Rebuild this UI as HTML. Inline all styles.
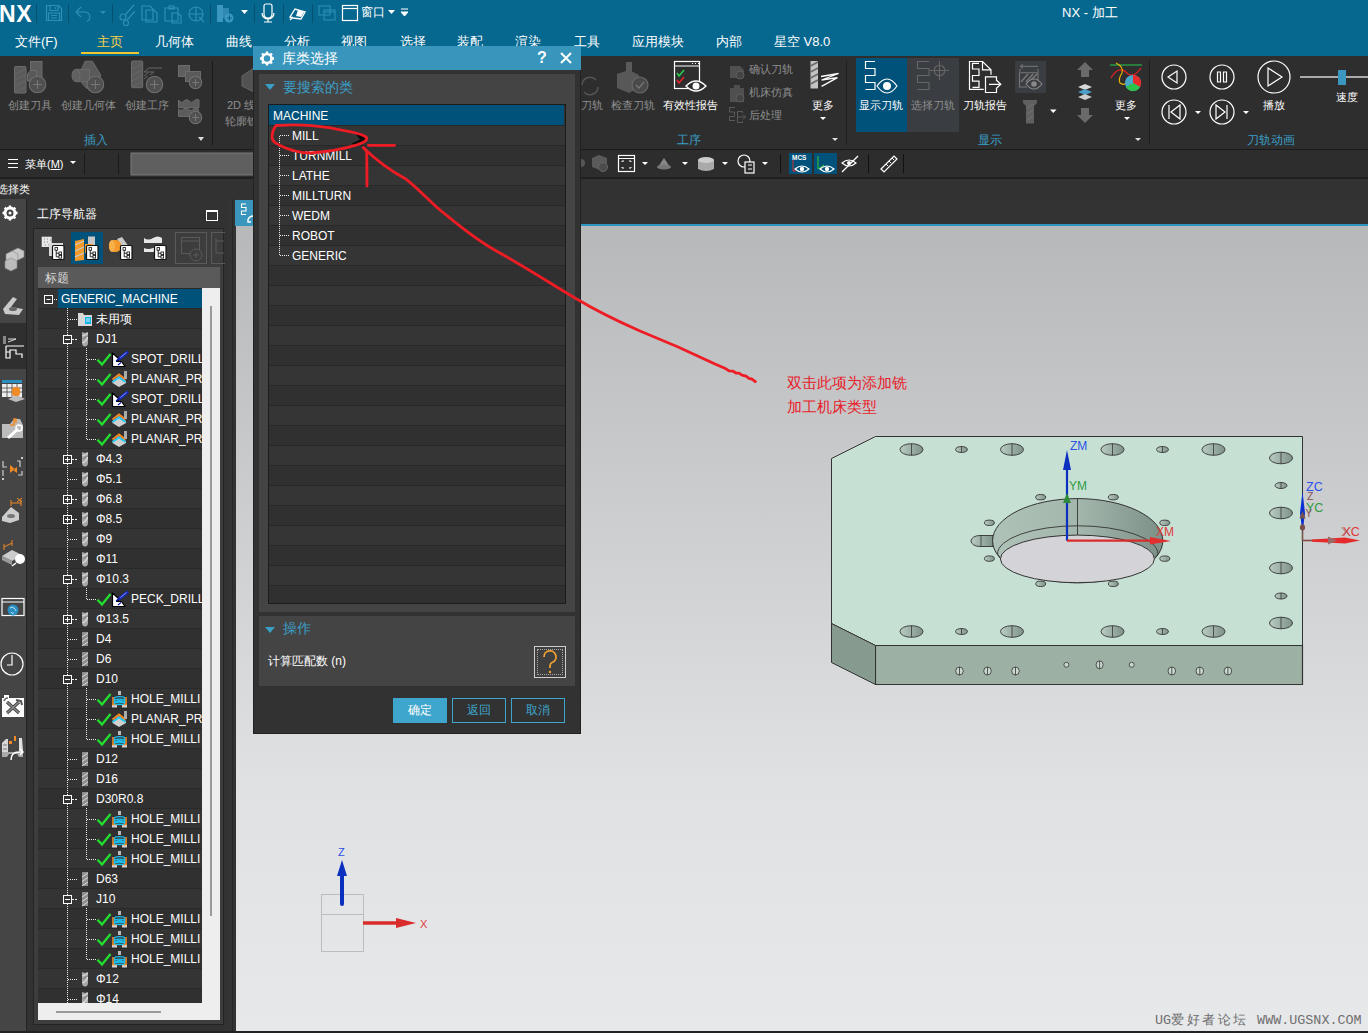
<!DOCTYPE html>
<html><head><meta charset="utf-8">
<style>
*{margin:0;padding:0;box-sizing:border-box}
html,body{width:1368px;height:1033px;overflow:hidden;background:#2f2f2f;font-family:"Liberation Sans",sans-serif;color:#fff}
.a{position:absolute}
svg{display:block}
.sepq{top:4px;width:1px;height:19px;background:#03506f}
.menu{top:33px;font-size:13px;line-height:17px;color:#fff;white-space:nowrap}
.rl{font-size:11px;line-height:14px;white-space:nowrap}
.rg{top:133px;font-size:12px;line-height:15px;color:#3a9ec6;white-space:nowrap}
.tt{position:absolute;height:20px;line-height:21px;font-size:12px;color:#fff;white-space:nowrap}
.dl{position:absolute;font-size:12px;line-height:20px;color:#fff;white-space:nowrap}
</style></head><body>

<!-- TOP BAR -->
<div class="a" style="left:0;top:0;width:1368px;height:56px;background:#07688f"></div>
<div class="a" style="left:-1px;top:1px;font:bold 23px/26px 'Liberation Sans',sans-serif;color:#fff;letter-spacing:0.6px">NX</div>
<div class="a sepq" style="left:36px"></div>
<div class="a sepq" style="left:68px"></div>
<div class="a sepq" style="left:112px"></div>
<div class="a sepq" style="left:210px"></div>
<div class="a sepq" style="left:254px"></div>
<div class="a sepq" style="left:283px"></div>
<div class="a sepq" style="left:312px"></div>
<svg class="a" style="left:0;top:0" width="420" height="30" fill="none" stroke="#2d8fb5" stroke-width="1.2">
 <!-- save -->
 <path d="M46.5 5.5H58.5L61.5 8.5V20.5H46.5Z M50 5.5V10.5H58V5.5 M48.5 20.5V13H59.5V20.5 M51 15.5h6M51 18h6 M55.5 7v2"/>
 <!-- undo -->
 <path d="M76 12l5-5 M76 12l5 5 M76 12h9a5 5 0 0 1 2 9.5"/>
 <path d="M100 11h6l-3 3z" fill="#2d8fb5" stroke="none"/>
 <!-- cut -->
 <circle cx="123" cy="17" r="3"/><circle cx="126" cy="23" r="2.5"/><path d="M125 15l9-10 M127 20l8-9"/>
 <!-- copy -->
 <path d="M142 6h8l3 3v11h-11z M146 10h8l3 3v9h-11z"/>
 <!-- paste -->
 <path d="M165 8h13v13h-13z M169 6h5v3h-5z M172 13h6l3 3v7h-9z"/>
 <!-- move -->
 <circle cx="196" cy="14" r="7"/><path d="M189 14h14 M196 7v14 M199 17l5 5"/>
</svg>
<svg class="a" style="left:0;top:0" width="420" height="30">
 <rect x="217" y="5" width="6" height="17" fill="#3b97c0"/><rect x="223" y="8" width="6" height="10" fill="#2f88b0"/><circle cx="229" cy="18" r="4.5" fill="#3b97c0"/><path d="M227 18h5M229.5 15.5v5" stroke="#07688f" stroke-width="1.2"/>
 <path d="M241 10h7l-3.5 4z" fill="#fff"/>
 <path d="M266 4h4a2 2 0 0 1 2 2v8a4 4 0 0 1-8 0V6a2 2 0 0 1 2-2z M262 13a6 6 0 0 0 12 0 M268 19v3 M264 22h8" fill="none" stroke="#fff" stroke-width="1.2"/>
 <path d="M290 17l5-8 10 3-4 7-8-1z M293 17l-3 3" fill="none" stroke="#fff" stroke-width="1.4"/><path d="M298 10l6 2-3 5-5-1z" fill="#fff"/>
 <path d="M319 6h11v9h-11z M324 10h11v10h-11z M324 12h11" fill="none" stroke="#2d8fb5" stroke-width="1.1"/>
 <rect x="342.5" y="5.5" width="15" height="15" fill="none" stroke="#fff" stroke-width="1.2"/><path d="M343 8.5h14" stroke="#fff" stroke-width="1.2"/>
 <path d="M388 10h7l-3.5 4z" fill="#fff"/>
 <path d="M401 9h7M401 12h7l-3.5 4z" fill="#fff" stroke="#fff" stroke-width="1"/>
</svg>
<div class="a" style="left:361px;top:4px;font-size:12px;line-height:16px;color:#fff">窗口</div>
<div class="a" style="left:1062px;top:5px;font-size:13px;line-height:16px;color:#fff">NX - 加工</div>
<!-- MENU TABS -->
<div class="a menu" style="left:15px">文件(F)</div>
<div class="a menu" style="left:97px;color:#f7d04a">主页</div>
<div class="a" style="left:81px;top:52px;width:58px;height:2px;background:#f5c52e"></div>
<div class="a menu" style="left:155px">几何体</div>
<div class="a menu" style="left:226px">曲线</div>
<div class="a menu" style="left:284px">分析</div>
<div class="a menu" style="left:341px">视图</div>
<div class="a menu" style="left:400px">选择</div>
<div class="a menu" style="left:457px">装配</div>
<div class="a menu" style="left:515px">渲染</div>
<div class="a menu" style="left:574px">工具</div>
<div class="a menu" style="left:632px">应用模块</div>
<div class="a menu" style="left:716px">内部</div>
<div class="a menu" style="left:774px">星空 V8.0</div>

<!-- RIBBON -->
<div class="a" style="left:0;top:56px;width:1368px;height:93px;background:#2e2e2e"></div>
<div class="a" style="left:0;top:148.5px;width:1368px;height:1.5px;background:#1a1a1a"></div>
<svg class="a" style="left:0;top:56px" width="1368" height="93">
 <defs>
  <linearGradient id="gdim" x1="0" y1="0" x2="1" y2="1"><stop offset="0" stop-color="#6a6a6a"/><stop offset="1" stop-color="#4f4f4f"/></linearGradient>
 </defs>
 <!-- 创建刀具 -->
 <g stroke="#6c6c6c" stroke-width="1">
 <rect x="14.5" y="10.5" width="11.5" height="26.5" rx="1" fill="#5a5a5a"/>
 <path d="M15 18l10-5M15 24l10-5M15 30l10-5M15 36l10-5" stroke="#666" stroke-width="1"/>
 <rect x="30.5" y="5.5" width="11.5" height="16" fill="#5c5c5c"/>
 <path d="M27.5 18l3-3.5h6V25h-9z" fill="#585858"/>
 <circle cx="37.5" cy="28.5" r="8.3" fill="#505050" stroke="#707070" stroke-width="1.1"/><path d="M33 28.5h9M37.5 24v9" stroke="#777"/>
 <!-- 创建几何体 -->
 <path d="M81.6 12.9L85.2 5.2H92.4L100.9 19.3L95.7 32.2H86.4L82 27.3Z" fill="#5a5a5a"/>
 <path d="M76 13.3H89.6V25.7H76" fill="#5e5e5e"/><ellipse cx="76" cy="19.5" rx="4" ry="6.2" fill="#616161"/>
 <circle cx="95.4" cy="28.5" r="8.3" fill="#505050" stroke="#707070" stroke-width="1.1"/><path d="M91 28.5h9M95.4 24v9" stroke="#777"/>
 <!-- 创建工序 -->
 <rect x="131.5" y="5" width="11.2" height="26.7" rx="1" fill="#5a5a5a"/>
 <path d="M132 13l10-5M132 19l10-5M132 25l10-5M132 31l10-5" stroke="#666"/>
 <path d="M144 16l5-4h13M144 16h10l-4 3M144 20l4-3M144 23l4-3" fill="none" stroke="#666"/>
 <circle cx="154.5" cy="28.5" r="8.2" fill="#505050" stroke="#707070" stroke-width="1.1"/><path d="M150 28.5h9M154.5 24v9" stroke="#777"/>
 <!-- small icons -->
 <rect x="178.5" y="9.5" width="11" height="11" fill="#5e5e5e"/><rect x="185.5" y="15.5" width="15" height="10" fill="#5a5a5a"/>
 <circle cx="195.5" cy="26.6" r="6.2" fill="#505050" stroke="#707070" stroke-width="1.1"/><path d="M192 26.6h7M195.5 23v7" stroke="#777"/>
 <path d="M178.5 51.7V44q3 4 5.5 1t5 0 5 0 5-1v7.7z" fill="#5c5c5c"/>
 <path d="M178.5 60.4V53.2q2.5 3 5 0t5 0 5 0 5 0v7.2z" fill="#5c5c5c"/>
 <circle cx="195.5" cy="61.4" r="6.2" fill="#505050" stroke="#707070" stroke-width="1.1"/><path d="M192 61.4h7M195.5 58v7" stroke="#777"/>
 </g>
 <path d="M198 81h6l-3 4z" fill="#ddd"/>
 <rect x="212" y="5" width="1" height="84" fill="#1a1a1a"/>
 <!-- 2D partially -->
 <path d="M242 20l12-8v24l-12-6z" fill="#525252" stroke="#666"/>
 <!-- 刀轨 partial icon refresh -->
 <path d="M582 29a8 8 0 0 1 14-5 M598 31a8 8 0 0 1-14 5" fill="none" stroke="#555" stroke-width="1.5"/>
 <!-- 检查刀轨 -->
 <rect x="626" y="6" width="6" height="15" fill="#5a5a5a"/><path d="M617 18l12-4 10 5v13l-10 5-12-5z" fill="#585858"/><circle cx="640" cy="29" r="8" fill="#4a4a4a" stroke="#6a6a6a" stroke-width="1.2"/><path d="M636 29l3 3 5-6" stroke="#777" fill="none" stroke-width="1.2"/>
 <!-- 有效性报告 -->
 <rect x="674.5" y="5.5" width="25" height="27" fill="none" stroke="#fff" stroke-width="1.2"/><path d="M675 10h25" stroke="#fff"/><path d="M692 7.5h1M695 7.5h1M698 7.5h1" stroke="#fff"/>
 <path d="M677 17l2 3 5-6" stroke="#2cc84a" stroke-width="1.6" fill="none"/><path d="M677 24l2 3 5-6" stroke="#e2232a" stroke-width="1.6" fill="none"/>
 <path d="M686 30q10-10 20 0q-10 10-20 0z" fill="#2e2e2e" stroke="#fff" stroke-width="1.4"/><circle cx="696" cy="30" r="3.5" fill="#fff"/>
 <!-- small rows -->
 <path d="M730 10h10l4 4v8h-14z" fill="#4f4f4f"/><circle cx="740" cy="19" r="4" fill="#444" stroke="#5e5e5e"/>
 <path d="M730 32h4v-3h6v3h4v14h-14z" fill="#4f4f4f"/><circle cx="740" cy="42" r="4" fill="#444" stroke="#5e5e5e"/>
 <path d="M735 51.5H729.5V56H734.5V60.5H729.5V64.5H735M742.5 57V55.5H737.5V66.5H742.5V65M738 61H745.5M743 58.5L745.5 61L743 63.5" stroke="#5a5a5a" fill="none"/>
 <!-- 更多 tool -->
 <path d="M810.5 5h7.5v27.5h-7.5z" fill="#c4c4c4"/><path d="M810.5 10l7.5-4M810.5 16l7.5-4M810.5 22l7.5-4M810.5 28l7.5-4" stroke="#6a6a6a" stroke-width="1.6"/>
 <path d="M821 20.5L838.6 17.5L821.6 24L837.4 21.6L821.6 30.4" stroke="#fff" stroke-width="1.3" fill="none" stroke-linejoin="bevel"/>
 <path d="M820 61h6l-3 3z" fill="#fff"/>
 <path d="M832 82h6l-3 3z" fill="#ddd"/>
 <rect x="846" y="5" width="1" height="84" fill="#1e1e1e"/>
 <!-- 显示刀轨 -->
 <rect x="856" y="2" width="51" height="74" fill="#01527a"/>
 <path d="M875 5.5H865.5V12.5H875V19.5H865.5V26.5H875V33.5H865.5" stroke="#fff" stroke-width="1.2" fill="none"/>
 <path d="M877 30q10-14 20 0q-10 14-20 0z" fill="#01527a" stroke="#fff" stroke-width="1.2"/><circle cx="887" cy="30" r="4" fill="#fff"/>
 <!-- 选择刀轨 -->
 <rect x="907" y="2" width="52" height="74" fill="#3a3d41"/>
 <path d="M929 5.5H917.5V12.5H929V19.5H917.5V26.5H929V33.5H917.5" stroke="#666" stroke-width="1.1" fill="none"/><circle cx="939.5" cy="14.5" r="5.3" stroke="#666" fill="none" stroke-width="1.1"/><path d="M930 14.5h19M939.5 5v19" stroke="#666" stroke-width="1.1"/>
 <!-- 刀轨报告 -->
 <path d="M983.7 33.3H969.5V5.5H982.5L991 13.8V18.7" fill="none" stroke="#fff" stroke-width="1.2"/><path d="M982.5 5.5V13.8H991" fill="none" stroke="#fff" stroke-width="1.2"/>
 <path d="M979 7.3H972.5V13H979V19.5H972.5V25.2H979V31.3H972.5" stroke="#fff" fill="none" stroke-width="1.2"/>
 <path d="M996.5 24V20.8H985.5V36.5H996.5V33" fill="none" stroke="#fff" stroke-width="1.2"/><path d="M989 28.3H1000.5M996 23.8L1000.8 28.3L996 32.8" stroke="#fff" fill="none" stroke-width="1.2"/>
 <!-- display small -->
 <rect x="1015" y="5" width="31" height="32" fill="#3a3d41"/>
 <path d="M1021 10.3h17M1020 10.3l3-2M1020 10.3l3 2M1020 13v3M1038 13v3" stroke="#777" fill="none" stroke-width="1"/>
 <path d="M1019.5 16.8H1038V26.8M1019.5 16.8V31H1027" stroke="#777" fill="none" stroke-width="1.1"/>
 <path d="M1021 26l7-8M1026 26l7-8M1031 24l6-6" stroke="#777" stroke-width="1.6"/>
 <path d="M1026 28q8-10 16 0q-8 10-16 0z" fill="#3a3d41" stroke="#888" stroke-width="1.1"/><circle cx="1034" cy="28" r="2.8" fill="#888"/>
 <path d="M1023 44h14v3l-3 3v17.5h-8V50l-3-3z" fill="#606060"/><path d="M1027 52l6-4M1027 58l6-4M1027 64l6-4" stroke="#6e6e6e" stroke-width="1.2"/>
 <path d="M1050 53.5h6.5l-3.25 3.5z" fill="#fff"/>
 <path d="M1085 6l8 8h-4v7h-8v-7h-4z" fill="#6a6a6a"/>
 <path d="M1078 31l7-3 7 3-7 3z" fill="#d8d8d8"/><path d="M1078 36l7-3 7 3-7 3z" fill="#4a9fc8"/><path d="M1078 41l7-3 7 3-7 3z" fill="#ccc"/>
 <path d="M1081 52h8v7h4l-8 8-8-8h4z" fill="#6a6a6a"/>
 <!-- 更多 colorful -->
 <path d="M1110 9h32" stroke="#29b34a" stroke-width="1.2"/><path d="M1111 22q8-14 17-4q6 4 13-6" stroke="#e22" stroke-width="1.2" fill="none"/><path d="M1116 7q8 4 6 10q-4 6-2 10 4 3 8-1" stroke="#e8b400" stroke-width="1.2" fill="none"/>
 <circle cx="1133" cy="27" r="8" fill="#4aa8c8"/><path d="M1133 27v-8a8 8 0 0 1 7 12z" fill="#e82a2a"/><path d="M1133 27l7 4a8 8 0 0 1-14 0z" fill="#2cc34c"/>
 <path d="M1124 61h6l-3 3z" fill="#fff"/>
 <path d="M1135 82h6l-3 3z" fill="#ddd"/>
 <rect x="1149" y="5" width="1" height="84" fill="#1e1e1e"/>
 <!-- animation -->
 <g stroke="#fff" stroke-width="1.2" fill="none">
  <circle cx="1174" cy="21" r="12"/><path d="M1168 21l9-6v12z"/>
  <circle cx="1222" cy="21" r="12"/><path d="M1217.5 16h3v10h-3z M1223.5 16h3v10h-3z"/>
  <circle cx="1274" cy="21" r="16"/><path d="M1268 12l14 9-14 9z"/>
  <circle cx="1174" cy="56" r="12"/><path d="M1169 49v14 M1180 49l-9 7 9 7z"/>
  <circle cx="1222" cy="56" r="12"/><path d="M1227 49v14 M1216 49l9 7-9 7z"/>
 </g>
 <path d="M1195 55h6l-3 3z M1243 55h6l-3 3z" fill="#fff"/>
 <rect x="1300" y="20" width="68" height="2" fill="#aaa"/><rect x="1338" y="14" width="8" height="15" fill="#3b97c0"/>
</svg>
<div class="a rl" style="left:8px;top:155px;top:98px;color:#8f8f8f">创建刀具</div>
<div class="a rl" style="left:61px;top:98px;color:#8f8f8f">创建几何体</div>
<div class="a rl" style="left:125px;top:98px;color:#8f8f8f">创建工序</div>
<div class="a rl" style="left:227px;top:98px;color:#8f8f8f">2D 线</div>
<div class="a rl" style="left:225px;top:114px;color:#8f8f8f">轮廓铣</div>
<div class="a rg" style="left:84px">插入</div>
<div class="a rl" style="left:581px;top:98px;color:#8f8f8f">刀轨</div>
<div class="a rl" style="left:611px;top:98px;color:#8f8f8f">检查刀轨</div>
<div class="a rl" style="left:663px;top:98px;color:#fff">有效性报告</div>
<div class="a rl" style="left:749px;top:62px;color:#8f8f8f">确认刀轨</div>
<div class="a rl" style="left:749px;top:85px;color:#8f8f8f">机床仿真</div>
<div class="a rl" style="left:749px;top:108px;color:#8f8f8f">后处理</div>
<div class="a rl" style="left:812px;top:98px;color:#fff">更多</div>
<div class="a rg" style="left:677px">工序</div>
<div class="a rl" style="left:859px;top:98px;color:#fff">显示刀轨</div>
<div class="a rl" style="left:911px;top:98px;color:#8f8f8f">选择刀轨</div>
<div class="a rl" style="left:963px;top:98px;color:#fff">刀轨报告</div>
<div class="a rl" style="left:1115px;top:98px;color:#fff">更多</div>
<div class="a rg" style="left:978px">显示</div>
<div class="a rl" style="left:1263px;top:98px;color:#fff">播放</div>
<div class="a rl" style="left:1336px;top:90px;color:#fff">速度</div>
<div class="a rg" style="left:1247px">刀轨动画</div>
<!-- TOOLBAR ROW -->
<div class="a" style="left:0;top:150px;width:1368px;height:27px;background:#2d2d2d"></div>
<div class="a" style="left:0;top:177px;width:1368px;height:2px;background:#1f1f1f"></div>
<svg class="a" style="left:0;top:150px" width="1368" height="27">
 <path d="M8 9.5h10M8 13.5h10M8 17.5h10" stroke="#fff" stroke-width="1"/>
 <path d="M70 11h6l-3 3z" fill="#fff"/>
 <rect x="84" y="3" width="1" height="21" fill="#1a1a1a"/><rect x="118" y="3" width="1" height="21" fill="#1a1a1a"/>
 <rect x="131" y="3" width="130" height="22" fill="#5f5f5f" stroke="#7a7a7a"/>
 <circle cx="581" cy="13" r="4" fill="#555"/>
 <path d="M592 8l7-3 8 3v9l-7 3-8-3z" fill="#5a5a5a"/><circle cx="603" cy="17" r="4.5" fill="#4c4c4c" stroke="#666"/>
 <rect x="618.5" y="5.5" width="16" height="16" fill="none" stroke="#fff" stroke-width="1.2"/><path d="M619 8.5h15 M622 12v-1h2 M631 12v-1h-2 M622 17v1h2 M631 17v1h-2" stroke="#fff" fill="none"/>
 <path d="M642 12h6l-3 3z M682 12h6l-3 3z M722 12h6l-3 3z M762 12h6l-3 3z" fill="#fff"/>
 <path d="M658 17l6-9 6 9q-6 4-12 0z" fill="#888"/><ellipse cx="664" cy="17" rx="7" ry="2.5" fill="#777"/>
 <path d="M698 10q8-4 16 0v9q-8 4-16 0z" fill="#aaa"/><ellipse cx="706" cy="10" rx="8" ry="3" fill="#ccc"/>
 <circle cx="744" cy="11" r="6" fill="none" stroke="#fff" stroke-width="1.2"/><rect x="745" y="12" width="9" height="11" fill="#2d2d2d" stroke="#fff" stroke-width="1.2"/><path d="M748 15h4M748 19h4" stroke="#fff"/>
 <rect x="780" y="4" width="1" height="19" fill="#111"/>
 <rect x="789" y="3" width="23" height="21" fill="#01527a"/><rect x="814" y="3" width="23" height="21" fill="#01527a"/>
 <text x="792" y="10" font-size="6.5" font-family="Liberation Sans" font-weight="bold" fill="#fff">MCS</text>
 <path d="M793 10v11h3M793 21l4-3" stroke="#c33" fill="none"/><path d="M818 6v13 M818 19l6-4" stroke="#3c3" fill="none"/>
 <path d="M795 19q7-6 14 0q-7 6-14 0z M820 19q7-6 14 0q-7 6-14 0z" fill="none" stroke="#fff" stroke-width="1.2"/><circle cx="802" cy="19" r="2.2" fill="#fff"/><circle cx="827" cy="19" r="2.2" fill="#fff"/>
 <path d="M842 13q7-6 14 0q-7 6-14 0z" fill="none" stroke="#fff" stroke-width="1.2"/><path d="M842 22l16-16" stroke="#fff" stroke-width="1.2"/><circle cx="849" cy="13" r="2" fill="#fff"/>
 <rect x="868" y="4" width="1" height="19" fill="#111"/>
 <path d="M881 19l13-13 3 3-13 13z" fill="none" stroke="#fff" stroke-width="1.2"/><path d="M886 14l2 2M889 11l2 2M892 8l2 2" stroke="#fff"/>
 <rect x="903" y="4" width="1" height="19" fill="#111"/>
</svg>
<div class="a" style="left:25px;top:157px;font-size:11px;line-height:14px;color:#fff">菜单(<u>M</u>)</div>
<!-- SELECT ROW -->
<div class="a" style="left:0;top:179px;width:1368px;height:20px;background:#323232"></div>
<div class="a" style="left:-3px;top:181px;font-size:11px;line-height:16px;color:#fff">选择类</div>

<!-- LEFT STRIP -->
<div class="a" style="left:0;top:199px;width:26px;height:834px;background:#454545"></div>
<div class="a" style="left:0;top:323px;width:26px;height:46px;background:#2f2f2f"></div>
<div class="a" style="left:26px;top:199px;width:1px;height:834px;background:#242424"></div>
<svg class="a" style="left:0;top:199px" width="27" height="834">
 <!-- gear -->
 <g transform="translate(10,14)"><circle r="5" fill="none" stroke="#fff" stroke-width="3"/><path d="M0-7.5v3M0 4.5v3M-7.5 0h3M4.5 0h3M-5.3-5.3l2 2M3.3 3.3l2 2M-5.3 5.3l2-2M3.3-3.3l2-2" stroke="#fff" stroke-width="2.5"/><circle r="1.5" fill="#fff"/></g>
 <!-- cubes -->
 <path d="M6 55l6-3 6 3v6l-6 3-6-3z M12 52l6-3 6 3v6l-6 3" fill="#c8c8c8" stroke="#888" stroke-width="0.6"/><path d="M5 62l6-3 6 3v7l-6 3-6-3z" fill="#bbb" stroke="#888" stroke-width="0.6"/>
 <!-- bracket -->
 <path d="M3 110l10-12 4 2-6 8 12 2-4 6-14-1z" fill="#c9c9c9"/><ellipse cx="13" cy="110" rx="4" ry="2" fill="#666"/>
 <!-- ops tree -->
 <path d="M3 137h3v8h-3z" fill="#888"/><path d="M8 140h8M8 143l8-3" stroke="#ddd"/><path d="M6 147h18M6 147v12h4v-8h6v4h6v4" stroke="#fff" fill="none" stroke-width="1.2"/><path d="M6 153h4" stroke="#fff"/>
 <!-- table -->
 <rect x="2" y="181" width="20" height="3" fill="#2a8ec0"/><path d="M2 185h20v13h-20z" fill="#eee"/><path d="M2 189h20M2 193h20M7 185v13M12 185v13M17 185v13" stroke="#454545" stroke-width="0.8"/><path d="M8 200l9-4 8 4-9 3z" fill="#bbb"/><rect x="12" y="188" width="8" height="9" rx="3" fill="#f08a24"/>
 <!-- machine wrench -->
 <path d="M2 225h8l4-5h6l3 6v13h-21z" fill="#bdbdbd"/><path d="M10 226h4v-6h2v4" stroke="#f08a24" stroke-width="1.5" fill="none"/><path d="M8 239l10-9" stroke="#fff" stroke-width="3"/><circle cx="19" cy="229" r="3" fill="none" stroke="#fff" stroke-width="1.5"/>
 <!-- dots -->
 <path d="M3 262v6h4M3 271v6M17 262h3v6M22 272v4h-4" stroke="#ccc" fill="none" stroke-width="1.2"/><path d="M10 266l5 4-5 4z M17 268l-4 3 4 3z" fill="#f08a24"/><rect x="2" y="279" width="2" height="2" fill="#ccc"/><rect x="21" y="258" width="2" height="2" fill="#ccc"/>
 <!-- bracket w dims -->
 <path d="M2 318l9-10 8 6v7l-9 3-8-2z" fill="#ccc"/><ellipse cx="11" cy="317" rx="4" ry="2" fill="#777"/><path d="M11 304h10M11 301v6M21 301v6M17 303l5-4M17 299l5 4" stroke="#f08a24" fill="none"/>
 <!-- measure -->
 <path d="M2 357l10-6 10 5-10 6z" fill="#ccc"/><path d="M2 357v4l10 5v-4z" fill="#999"/><circle cx="20" cy="360" r="5" fill="#fff"/><path d="M16 364l-4 3" stroke="#fff" stroke-width="1.5"/><path d="M4 348l8-4M4 345v6M12 341v6" stroke="#f08a24" fill="none"/>
 <!-- web -->
 <rect x="2" y="399.5" width="22" height="17" fill="none" stroke="#fff" stroke-width="1.2"/><path d="M2 403h22" stroke="#fff"/><circle cx="13" cy="411" r="5.5" fill="#2a8ec0"/><path d="M10 409q2-2 4 0t2 3M11 413q1 2 3 1" stroke="#bfe7f5" fill="none"/>
 <!-- clock -->
 <circle cx="12" cy="465" r="11" fill="none" stroke="#fff" stroke-width="1.2"/><path d="M12 456v10h-5" stroke="#fff" fill="none" stroke-width="1.2"/>
 <!-- tools -->
 <path d="M2 499h2v-3h5v3h15v19h-22z" fill="#fff"/><path d="M7 514l12-11M7 503l12 11" stroke="#444" stroke-width="3.2"/><path d="M7 514l12-11M7 503l12 11" stroke="#888" stroke-width="1.6"/><path d="M16 501l5 1 1 4" stroke="#555" stroke-width="2" fill="none"/><path d="M4 502q1-3 4-3" stroke="#666" stroke-width="1.6" fill="none"/>
 <!-- machine arrow -->
 <path d="M2 544l4-4h2v15h-6z" fill="#d8d8d8"/><path d="M3 546h4M3 550h4" stroke="#777"/><path d="M2 553h21v5h-4l-2-3h-8l-2 3h-5z" fill="#aaa"/><path d="M9 542h3v3h-3zM14 537h2v5h-2z" fill="#f08a24"/><path d="M19 539l3 0 1 13h-4z" fill="#e0e0e0"/><path d="M11 561q0-8 8-8h3M20 550l3 3-3 3" stroke="#fff" stroke-width="1.5" fill="none"/>
</svg>
<!-- NAVIGATOR -->
<div class="a" style="left:27px;top:199px;width:209px;height:834px;background:#323232"></div>
<div class="a" style="left:37px;top:206px;font-size:12px;line-height:16px;color:#fff">工序导航器</div>
<div class="a" style="left:206px;top:210px;width:12px;height:11px;border:1.5px solid #fff;border-top-width:2px"></div>
<div class="a" style="left:33px;top:228px;width:191px;height:797px;background:#3d3d3d;border:1px solid #242424"></div>
<svg class="a" style="left:33px;top:228px" width="192" height="40">
 <rect x="8.7" y="8.7" width="10" height="10.3" fill="#e8e8e8"/><path d="M11 11h1M14 11h1M11 14h1M14 14h1M17 12h1M12 17h1M15 17h1" stroke="#888"/><rect x="16" y="15" width="14" height="13" fill="#d8d8d8"/>
 <rect x="19.5" y="17.5" width="11.5" height="14" rx="1" fill="#fff" stroke="#111" stroke-width="1.2"/><path d="M23.2 22V28.8H26M23.2 25.2H26" stroke="#111" stroke-width="0.9" fill="none"/><rect x="22" y="19.6" width="2.6" height="2.6" fill="none" stroke="#111" stroke-width="0.8"/><rect x="26" y="24" width="2.6" height="2.6" fill="none" stroke="#111" stroke-width="0.8"/><rect x="26" y="27.5" width="2.6" height="2.6" fill="none" stroke="#111" stroke-width="0.8"/>
 <rect x="38" y="4" width="32" height="32" fill="#01527a"/>
 <path d="M42 13l9-2v21l-9 1z" fill="#f39a2a"/><path d="M42 17l9-4M42 23l9-4M42 29l9-4" stroke="#c9c9c9" stroke-width="1.3"/><rect x="55" y="8.5" width="7" height="9" fill="#c8c8c8"/><path d="M52 16h8v9h-8z" fill="#f39a2a"/>
 <rect x="53.5" y="17.5" width="11.5" height="14" rx="1" fill="#fff" stroke="#111" stroke-width="1.2"/><path d="M57.2 22V28.8H60M57.2 25.2H60" stroke="#111" stroke-width="0.9" fill="none"/><rect x="56" y="19.6" width="2.6" height="2.6" fill="none" stroke="#111" stroke-width="0.8"/><rect x="60" y="24" width="2.6" height="2.6" fill="none" stroke="#111" stroke-width="0.8"/><rect x="60" y="27.5" width="2.6" height="2.6" fill="none" stroke="#111" stroke-width="0.8"/>
 <path d="M84 11l5-2 7 10-3 5z" fill="#c8c8c8"/><rect x="76" y="12" width="12" height="12" rx="5" fill="#f39a2a"/><ellipse cx="79" cy="18" rx="3" ry="6" fill="#f7b04a"/>
 <rect x="87.5" y="17.5" width="11.5" height="14" rx="1" fill="#fff" stroke="#111" stroke-width="1.2"/><path d="M91.2 22V28.8H94M91.2 25.2H94" stroke="#111" stroke-width="0.9" fill="none"/><rect x="90" y="19.6" width="2.6" height="2.6" fill="none" stroke="#111" stroke-width="0.8"/><rect x="94" y="24" width="2.6" height="2.6" fill="none" stroke="#111" stroke-width="0.8"/><rect x="94" y="27.5" width="2.6" height="2.6" fill="none" stroke="#111" stroke-width="0.8"/>
 <path d="M111 15V10q4 3 9 0t9 0v5z" fill="#e8e8e8"/><path d="M111 24v-4q4 2 9 0t9 0v4z" fill="#e8e8e8"/>
 <rect x="121.5" y="17.5" width="11.5" height="14" rx="1" fill="#fff" stroke="#111" stroke-width="1.2"/><path d="M125.2 22V28.8H128M125.2 25.2H128" stroke="#111" stroke-width="0.9" fill="none"/><rect x="124" y="19.6" width="2.6" height="2.6" fill="none" stroke="#111" stroke-width="0.8"/><rect x="128" y="24" width="2.6" height="2.6" fill="none" stroke="#111" stroke-width="0.8"/><rect x="128" y="27.5" width="2.6" height="2.6" fill="none" stroke="#111" stroke-width="0.8"/>
 <rect x="142.5" y="4.5" width="31" height="31" fill="none" stroke="#5a5a5a"/><rect x="148.5" y="9.5" width="18" height="16" fill="none" stroke="#5a5a5a"/><path d="M149 13h17" stroke="#5a5a5a"/><circle cx="163" cy="27" r="6" fill="#3d3d3d" stroke="#5a5a5a"/><path d="M160 27h6M163 24v6" stroke="#5a5a5a"/>
 <rect x="178.5" y="4.5" width="15" height="31" fill="none" stroke="#5a5a5a"/><path d="M183 10v15h8M183 13h8" stroke="#5a5a5a" fill="none"/>
</svg>
<div class="a" style="left:38px;top:267px;width:182px;height:21px;background:#5a5a5a"></div>
<div class="a" style="left:45px;top:270px;font-size:12px;line-height:16px;color:#ddd">标题</div>
<div class="a" style="left:38px;top:288px;width:182px;height:1px;background:#242424"></div>
<div class="a" style="left:38px;top:288px;width:164px;height:715px;overflow:hidden;background:#333">
<svg class="a" style="left:0;top:0" width="164" height="720"><rect x="0" y="0" width="164" height="20" fill="#343434"/><rect x="0" y="0" width="164" height="1" fill="#292929"/><rect x="0" y="20" width="164" height="20" fill="#303030"/><rect x="0" y="20" width="164" height="1" fill="#292929"/><rect x="0" y="40" width="164" height="20" fill="#343434"/><rect x="0" y="40" width="164" height="1" fill="#292929"/><rect x="0" y="60" width="164" height="20" fill="#303030"/><rect x="0" y="60" width="164" height="1" fill="#292929"/><rect x="0" y="80" width="164" height="20" fill="#343434"/><rect x="0" y="80" width="164" height="1" fill="#292929"/><rect x="0" y="100" width="164" height="20" fill="#303030"/><rect x="0" y="100" width="164" height="1" fill="#292929"/><rect x="0" y="120" width="164" height="20" fill="#343434"/><rect x="0" y="120" width="164" height="1" fill="#292929"/><rect x="0" y="140" width="164" height="20" fill="#303030"/><rect x="0" y="140" width="164" height="1" fill="#292929"/><rect x="0" y="160" width="164" height="20" fill="#343434"/><rect x="0" y="160" width="164" height="1" fill="#292929"/><rect x="0" y="180" width="164" height="20" fill="#303030"/><rect x="0" y="180" width="164" height="1" fill="#292929"/><rect x="0" y="200" width="164" height="20" fill="#343434"/><rect x="0" y="200" width="164" height="1" fill="#292929"/><rect x="0" y="220" width="164" height="20" fill="#303030"/><rect x="0" y="220" width="164" height="1" fill="#292929"/><rect x="0" y="240" width="164" height="20" fill="#343434"/><rect x="0" y="240" width="164" height="1" fill="#292929"/><rect x="0" y="260" width="164" height="20" fill="#303030"/><rect x="0" y="260" width="164" height="1" fill="#292929"/><rect x="0" y="280" width="164" height="20" fill="#343434"/><rect x="0" y="280" width="164" height="1" fill="#292929"/><rect x="0" y="300" width="164" height="20" fill="#303030"/><rect x="0" y="300" width="164" height="1" fill="#292929"/><rect x="0" y="320" width="164" height="20" fill="#343434"/><rect x="0" y="320" width="164" height="1" fill="#292929"/><rect x="0" y="340" width="164" height="20" fill="#303030"/><rect x="0" y="340" width="164" height="1" fill="#292929"/><rect x="0" y="360" width="164" height="20" fill="#343434"/><rect x="0" y="360" width="164" height="1" fill="#292929"/><rect x="0" y="380" width="164" height="20" fill="#303030"/><rect x="0" y="380" width="164" height="1" fill="#292929"/><rect x="0" y="400" width="164" height="20" fill="#343434"/><rect x="0" y="400" width="164" height="1" fill="#292929"/><rect x="0" y="420" width="164" height="20" fill="#303030"/><rect x="0" y="420" width="164" height="1" fill="#292929"/><rect x="0" y="440" width="164" height="20" fill="#343434"/><rect x="0" y="440" width="164" height="1" fill="#292929"/><rect x="0" y="460" width="164" height="20" fill="#303030"/><rect x="0" y="460" width="164" height="1" fill="#292929"/><rect x="0" y="480" width="164" height="20" fill="#343434"/><rect x="0" y="480" width="164" height="1" fill="#292929"/><rect x="0" y="500" width="164" height="20" fill="#303030"/><rect x="0" y="500" width="164" height="1" fill="#292929"/><rect x="0" y="520" width="164" height="20" fill="#343434"/><rect x="0" y="520" width="164" height="1" fill="#292929"/><rect x="0" y="540" width="164" height="20" fill="#303030"/><rect x="0" y="540" width="164" height="1" fill="#292929"/><rect x="0" y="560" width="164" height="20" fill="#343434"/><rect x="0" y="560" width="164" height="1" fill="#292929"/><rect x="0" y="580" width="164" height="20" fill="#303030"/><rect x="0" y="580" width="164" height="1" fill="#292929"/><rect x="0" y="600" width="164" height="20" fill="#343434"/><rect x="0" y="600" width="164" height="1" fill="#292929"/><rect x="0" y="620" width="164" height="20" fill="#303030"/><rect x="0" y="620" width="164" height="1" fill="#292929"/><rect x="0" y="640" width="164" height="20" fill="#343434"/><rect x="0" y="640" width="164" height="1" fill="#292929"/><rect x="0" y="660" width="164" height="20" fill="#303030"/><rect x="0" y="660" width="164" height="1" fill="#292929"/><rect x="0" y="680" width="164" height="20" fill="#343434"/><rect x="0" y="680" width="164" height="1" fill="#292929"/><rect x="0" y="700" width="164" height="20" fill="#303030"/><rect x="0" y="700" width="164" height="1" fill="#292929"/><rect x="20" y="1" width="144" height="19" fill="#01527a"/><path d="M29.5 20 V720" stroke="#eee" stroke-dasharray="1 1" /><path d="M48.5 60 V152" stroke="#eee" stroke-dasharray="1 1"/><path d="M48.5 300 V312" stroke="#eee" stroke-dasharray="1 1"/><path d="M48.5 400 V452" stroke="#eee" stroke-dasharray="1 1"/><path d="M48.5 520 V572" stroke="#eee" stroke-dasharray="1 1"/><path d="M48.5 620 V672" stroke="#eee" stroke-dasharray="1 1"/><rect x="6.5" y="7.5" width="8" height="8" fill="none" stroke="#fff"/><path d="M8.5 11.5h4" stroke="#fff"/><path d="M16 11.5h4" stroke="#eee" stroke-dasharray="1 1"/><path d="M30 31.5h9" stroke="#eee" stroke-dasharray="1 1"/><path d="M40 25h5l1 2h8v11h-14z" fill="#d8d8d8"/><rect x="47" y="29" width="6" height="7" fill="#12b5e8"/><path d="M48 31h4M48 33h4" stroke="#fff" stroke-width="0.8"/><rect x="25.5" y="47.5" width="8" height="8" fill="#333" stroke="#fff"/><path d="M27 51.5h5" stroke="#fff"/><path d="M34 51.5h5" stroke="#eee" stroke-dasharray="2 1"/><path d="M44 44L47 45L50 44V54.5Q50 58.5 47 58.5Q44 58.5 44 54.5Z" fill="#a9a9a9"/><path d="M44.5 48Q48 47 49.5 45M44.5 55Q49 53 49.5 49" stroke="#e8e8e8" stroke-width="1.1" fill="none"/><path d="M44.5 51l5-3" stroke="#777" stroke-width="0.9"/><path d="M49 71.5h9" stroke="#eee" stroke-dasharray="1 1"/><path d="M59.5 71.8L64 76.5L72.5 66" fill="none" stroke="#22e030" stroke-width="2.3"/><path d="M74.5 65L81 71L78.5 73.5H83.5L87 78.5H74.5Z" fill="#fff" stroke="#000" stroke-width="1.2" stroke-linejoin="round"/><path d="M78 73l3-2.5M80 77l3-2.5" stroke="#1020c0" stroke-width="1.3"/><path d="M81.8 70.3L89 64.4" stroke="#1a2ab8" stroke-width="3.2" stroke-linecap="round"/><path d="M82.5 69.5L88.5 64.5" stroke="#8090f0" stroke-width="1"/><path d="M49 91.5h9" stroke="#eee" stroke-dasharray="1 1"/><path d="M59.5 91.8L64 96.5L72.5 86" fill="none" stroke="#22e030" stroke-width="2.3"/><path d="M74.5 93L81 88L88 93V95L81 99L74.5 95Z" fill="#d0d0d0"/><path d="M74.5 91.5L81 86.5L87.5 91.5" fill="none" stroke="#f58a1f" stroke-width="1.8"/><path d="M74.5 94L81 89.5L87.5 94" fill="none" stroke="#22c6f2" stroke-width="1.8"/><path d="M86 83h3v8h-3z" fill="#aaa"/><path d="M49 111.5h9" stroke="#eee" stroke-dasharray="1 1"/><path d="M59.5 111.8L64 116.5L72.5 106" fill="none" stroke="#22e030" stroke-width="2.3"/><path d="M74.5 105L81 111L78.5 113.5H83.5L87 118.5H74.5Z" fill="#fff" stroke="#000" stroke-width="1.2" stroke-linejoin="round"/><path d="M78 113l3-2.5M80 117l3-2.5" stroke="#1020c0" stroke-width="1.3"/><path d="M81.8 110.3L89 104.4" stroke="#1a2ab8" stroke-width="3.2" stroke-linecap="round"/><path d="M82.5 109.5L88.5 104.5" stroke="#8090f0" stroke-width="1"/><path d="M49 131.5h9" stroke="#eee" stroke-dasharray="1 1"/><path d="M59.5 131.8L64 136.5L72.5 126" fill="none" stroke="#22e030" stroke-width="2.3"/><path d="M74.5 133L81 128L88 133V135L81 139L74.5 135Z" fill="#d0d0d0"/><path d="M74.5 131.5L81 126.5L87.5 131.5" fill="none" stroke="#f58a1f" stroke-width="1.8"/><path d="M74.5 134L81 129.5L87.5 134" fill="none" stroke="#22c6f2" stroke-width="1.8"/><path d="M86 123h3v8h-3z" fill="#aaa"/><path d="M49 151.5h9" stroke="#eee" stroke-dasharray="1 1"/><path d="M59.5 151.8L64 156.5L72.5 146" fill="none" stroke="#22e030" stroke-width="2.3"/><path d="M74.5 153L81 148L88 153V155L81 159L74.5 155Z" fill="#d0d0d0"/><path d="M74.5 151.5L81 146.5L87.5 151.5" fill="none" stroke="#f58a1f" stroke-width="1.8"/><path d="M74.5 154L81 149.5L87.5 154" fill="none" stroke="#22c6f2" stroke-width="1.8"/><path d="M86 143h3v8h-3z" fill="#aaa"/><rect x="25.5" y="167.5" width="8" height="8" fill="#333" stroke="#fff"/><path d="M27 171.5h5" stroke="#fff"/><path d="M29.5 169v5" stroke="#fff"/><path d="M34 171.5h5" stroke="#eee" stroke-dasharray="2 1"/><path d="M44 164L47 165L50 164V174.5Q50 178.5 47 178.5Q44 178.5 44 174.5Z" fill="#a9a9a9"/><path d="M44.5 168Q48 167 49.5 165M44.5 175Q49 173 49.5 169" stroke="#e8e8e8" stroke-width="1.1" fill="none"/><path d="M44.5 171l5-3" stroke="#777" stroke-width="0.9"/><path d="M30 191.5h9" stroke="#eee" stroke-dasharray="1 1"/><path d="M44 184L47 185L50 184V194.5Q50 198.5 47 198.5Q44 198.5 44 194.5Z" fill="#a9a9a9"/><path d="M44.5 188Q48 187 49.5 185M44.5 195Q49 193 49.5 189" stroke="#e8e8e8" stroke-width="1.1" fill="none"/><path d="M44.5 191l5-3" stroke="#777" stroke-width="0.9"/><rect x="25.5" y="207.5" width="8" height="8" fill="#333" stroke="#fff"/><path d="M27 211.5h5" stroke="#fff"/><path d="M29.5 209v5" stroke="#fff"/><path d="M34 211.5h5" stroke="#eee" stroke-dasharray="2 1"/><path d="M44 204L47 205L50 204V214.5Q50 218.5 47 218.5Q44 218.5 44 214.5Z" fill="#a9a9a9"/><path d="M44.5 208Q48 207 49.5 205M44.5 215Q49 213 49.5 209" stroke="#e8e8e8" stroke-width="1.1" fill="none"/><path d="M44.5 211l5-3" stroke="#777" stroke-width="0.9"/><rect x="25.5" y="227.5" width="8" height="8" fill="#333" stroke="#fff"/><path d="M27 231.5h5" stroke="#fff"/><path d="M29.5 229v5" stroke="#fff"/><path d="M34 231.5h5" stroke="#eee" stroke-dasharray="2 1"/><path d="M44 224L47 225L50 224V234.5Q50 238.5 47 238.5Q44 238.5 44 234.5Z" fill="#a9a9a9"/><path d="M44.5 228Q48 227 49.5 225M44.5 235Q49 233 49.5 229" stroke="#e8e8e8" stroke-width="1.1" fill="none"/><path d="M44.5 231l5-3" stroke="#777" stroke-width="0.9"/><path d="M30 251.5h9" stroke="#eee" stroke-dasharray="1 1"/><path d="M44 244L47 245L50 244V254.5Q50 258.5 47 258.5Q44 258.5 44 254.5Z" fill="#a9a9a9"/><path d="M44.5 248Q48 247 49.5 245M44.5 255Q49 253 49.5 249" stroke="#e8e8e8" stroke-width="1.1" fill="none"/><path d="M44.5 251l5-3" stroke="#777" stroke-width="0.9"/><path d="M30 271.5h9" stroke="#eee" stroke-dasharray="1 1"/><path d="M44 264L47 265L50 264V274.5Q50 278.5 47 278.5Q44 278.5 44 274.5Z" fill="#a9a9a9"/><path d="M44.5 268Q48 267 49.5 265M44.5 275Q49 273 49.5 269" stroke="#e8e8e8" stroke-width="1.1" fill="none"/><path d="M44.5 271l5-3" stroke="#777" stroke-width="0.9"/><rect x="25.5" y="287.5" width="8" height="8" fill="#333" stroke="#fff"/><path d="M27 291.5h5" stroke="#fff"/><path d="M34 291.5h5" stroke="#eee" stroke-dasharray="2 1"/><path d="M44 284L47 285L50 284V294.5Q50 298.5 47 298.5Q44 298.5 44 294.5Z" fill="#a9a9a9"/><path d="M44.5 288Q48 287 49.5 285M44.5 295Q49 293 49.5 289" stroke="#e8e8e8" stroke-width="1.1" fill="none"/><path d="M44.5 291l5-3" stroke="#777" stroke-width="0.9"/><path d="M49 311.5h9" stroke="#eee" stroke-dasharray="1 1"/><path d="M59.5 311.8L64 316.5L72.5 306" fill="none" stroke="#22e030" stroke-width="2.3"/><path d="M74.5 305L81 311L78.5 313.5H83.5L87 318.5H74.5Z" fill="#fff" stroke="#000" stroke-width="1.2" stroke-linejoin="round"/><path d="M78 313l3-2.5M80 317l3-2.5" stroke="#1020c0" stroke-width="1.3"/><path d="M81.8 310.3L89 304.4" stroke="#1a2ab8" stroke-width="3.2" stroke-linecap="round"/><path d="M82.5 309.5L88.5 304.5" stroke="#8090f0" stroke-width="1"/><rect x="25.5" y="327.5" width="8" height="8" fill="#333" stroke="#fff"/><path d="M27 331.5h5" stroke="#fff"/><path d="M29.5 329v5" stroke="#fff"/><path d="M34 331.5h5" stroke="#eee" stroke-dasharray="2 1"/><path d="M44 324L47 325L50 324V334.5Q50 338.5 47 338.5Q44 338.5 44 334.5Z" fill="#a9a9a9"/><path d="M44.5 328Q48 327 49.5 325M44.5 335Q49 333 49.5 329" stroke="#e8e8e8" stroke-width="1.1" fill="none"/><path d="M44.5 331l5-3" stroke="#777" stroke-width="0.9"/><path d="M30 351.5h9" stroke="#eee" stroke-dasharray="1 1"/><rect x="44" y="344" width="6" height="14" fill="#8e8e8e"/><path d="M44 349l6-4M44 353.5l6-4M44 358l6-4" stroke="#d8d8d8" stroke-width="1"/><path d="M30 371.5h9" stroke="#eee" stroke-dasharray="1 1"/><rect x="44" y="364" width="6" height="14" fill="#8e8e8e"/><path d="M44 369l6-4M44 373.5l6-4M44 378l6-4" stroke="#d8d8d8" stroke-width="1"/><rect x="25.5" y="387.5" width="8" height="8" fill="#333" stroke="#fff"/><path d="M27 391.5h5" stroke="#fff"/><path d="M34 391.5h5" stroke="#eee" stroke-dasharray="2 1"/><rect x="44" y="384" width="6" height="14" fill="#8e8e8e"/><path d="M44 389l6-4M44 393.5l6-4M44 398l6-4" stroke="#d8d8d8" stroke-width="1"/><path d="M49 411.5h9" stroke="#eee" stroke-dasharray="1 1"/><path d="M59.5 411.8L64 416.5L72.5 406" fill="none" stroke="#22e030" stroke-width="2.3"/><rect x="74" y="416.5" width="5" height="3" fill="#d0d0d0"/><rect x="84" y="416.5" width="5" height="3" fill="#d0d0d0"/><path d="M75 409V416.5H78.5M88 409V416.5H84.5" fill="none" stroke="#f58a1f" stroke-width="1.6"/><ellipse cx="81.5" cy="410.5" rx="5.2" ry="1.8" fill="none" stroke="#1ec0f0" stroke-width="1.3"/><ellipse cx="81.5" cy="413" rx="5.2" ry="1.8" fill="none" stroke="#1ec0f0" stroke-width="1.3"/><ellipse cx="81.5" cy="415" rx="5.2" ry="1.6" fill="none" stroke="#1ec0f0" stroke-width="1.2"/><rect x="80" y="403" width="3" height="4" fill="#bbb"/><path d="M49 431.5h9" stroke="#eee" stroke-dasharray="1 1"/><path d="M59.5 431.8L64 436.5L72.5 426" fill="none" stroke="#22e030" stroke-width="2.3"/><path d="M74.5 433L81 428L88 433V435L81 439L74.5 435Z" fill="#d0d0d0"/><path d="M74.5 431.5L81 426.5L87.5 431.5" fill="none" stroke="#f58a1f" stroke-width="1.8"/><path d="M74.5 434L81 429.5L87.5 434" fill="none" stroke="#22c6f2" stroke-width="1.8"/><path d="M86 423h3v8h-3z" fill="#aaa"/><path d="M49 451.5h9" stroke="#eee" stroke-dasharray="1 1"/><path d="M59.5 451.8L64 456.5L72.5 446" fill="none" stroke="#22e030" stroke-width="2.3"/><rect x="74" y="456.5" width="5" height="3" fill="#d0d0d0"/><rect x="84" y="456.5" width="5" height="3" fill="#d0d0d0"/><path d="M75 449V456.5H78.5M88 449V456.5H84.5" fill="none" stroke="#f58a1f" stroke-width="1.6"/><ellipse cx="81.5" cy="450.5" rx="5.2" ry="1.8" fill="none" stroke="#1ec0f0" stroke-width="1.3"/><ellipse cx="81.5" cy="453" rx="5.2" ry="1.8" fill="none" stroke="#1ec0f0" stroke-width="1.3"/><ellipse cx="81.5" cy="455" rx="5.2" ry="1.6" fill="none" stroke="#1ec0f0" stroke-width="1.2"/><rect x="80" y="443" width="3" height="4" fill="#bbb"/><path d="M30 471.5h9" stroke="#eee" stroke-dasharray="1 1"/><rect x="44" y="464" width="6" height="14" fill="#8e8e8e"/><path d="M44 469l6-4M44 473.5l6-4M44 478l6-4" stroke="#d8d8d8" stroke-width="1"/><path d="M30 491.5h9" stroke="#eee" stroke-dasharray="1 1"/><rect x="44" y="484" width="6" height="14" fill="#8e8e8e"/><path d="M44 489l6-4M44 493.5l6-4M44 498l6-4" stroke="#d8d8d8" stroke-width="1"/><rect x="25.5" y="507.5" width="8" height="8" fill="#333" stroke="#fff"/><path d="M27 511.5h5" stroke="#fff"/><path d="M34 511.5h5" stroke="#eee" stroke-dasharray="2 1"/><rect x="44" y="504" width="6" height="14" fill="#8e8e8e"/><path d="M44 509l6-4M44 513.5l6-4M44 518l6-4" stroke="#d8d8d8" stroke-width="1"/><path d="M49 531.5h9" stroke="#eee" stroke-dasharray="1 1"/><path d="M59.5 531.8L64 536.5L72.5 526" fill="none" stroke="#22e030" stroke-width="2.3"/><rect x="74" y="536.5" width="5" height="3" fill="#d0d0d0"/><rect x="84" y="536.5" width="5" height="3" fill="#d0d0d0"/><path d="M75 529V536.5H78.5M88 529V536.5H84.5" fill="none" stroke="#f58a1f" stroke-width="1.6"/><ellipse cx="81.5" cy="530.5" rx="5.2" ry="1.8" fill="none" stroke="#1ec0f0" stroke-width="1.3"/><ellipse cx="81.5" cy="533" rx="5.2" ry="1.8" fill="none" stroke="#1ec0f0" stroke-width="1.3"/><ellipse cx="81.5" cy="535" rx="5.2" ry="1.6" fill="none" stroke="#1ec0f0" stroke-width="1.2"/><rect x="80" y="523" width="3" height="4" fill="#bbb"/><path d="M49 551.5h9" stroke="#eee" stroke-dasharray="1 1"/><path d="M59.5 551.8L64 556.5L72.5 546" fill="none" stroke="#22e030" stroke-width="2.3"/><rect x="74" y="556.5" width="5" height="3" fill="#d0d0d0"/><rect x="84" y="556.5" width="5" height="3" fill="#d0d0d0"/><path d="M75 549V556.5H78.5M88 549V556.5H84.5" fill="none" stroke="#f58a1f" stroke-width="1.6"/><ellipse cx="81.5" cy="550.5" rx="5.2" ry="1.8" fill="none" stroke="#1ec0f0" stroke-width="1.3"/><ellipse cx="81.5" cy="553" rx="5.2" ry="1.8" fill="none" stroke="#1ec0f0" stroke-width="1.3"/><ellipse cx="81.5" cy="555" rx="5.2" ry="1.6" fill="none" stroke="#1ec0f0" stroke-width="1.2"/><rect x="80" y="543" width="3" height="4" fill="#bbb"/><path d="M49 571.5h9" stroke="#eee" stroke-dasharray="1 1"/><path d="M59.5 571.8L64 576.5L72.5 566" fill="none" stroke="#22e030" stroke-width="2.3"/><rect x="74" y="576.5" width="5" height="3" fill="#d0d0d0"/><rect x="84" y="576.5" width="5" height="3" fill="#d0d0d0"/><path d="M75 569V576.5H78.5M88 569V576.5H84.5" fill="none" stroke="#f58a1f" stroke-width="1.6"/><ellipse cx="81.5" cy="570.5" rx="5.2" ry="1.8" fill="none" stroke="#1ec0f0" stroke-width="1.3"/><ellipse cx="81.5" cy="573" rx="5.2" ry="1.8" fill="none" stroke="#1ec0f0" stroke-width="1.3"/><ellipse cx="81.5" cy="575" rx="5.2" ry="1.6" fill="none" stroke="#1ec0f0" stroke-width="1.2"/><rect x="80" y="563" width="3" height="4" fill="#bbb"/><path d="M30 591.5h9" stroke="#eee" stroke-dasharray="1 1"/><rect x="44" y="584" width="6" height="14" fill="#8e8e8e"/><path d="M44 589l6-4M44 593.5l6-4M44 598l6-4" stroke="#d8d8d8" stroke-width="1"/><rect x="25.5" y="607.5" width="8" height="8" fill="#333" stroke="#fff"/><path d="M27 611.5h5" stroke="#fff"/><path d="M34 611.5h5" stroke="#eee" stroke-dasharray="2 1"/><rect x="44" y="604" width="6" height="14" fill="#8e8e8e"/><path d="M44 609l6-4M44 613.5l6-4M44 618l6-4" stroke="#d8d8d8" stroke-width="1"/><path d="M49 631.5h9" stroke="#eee" stroke-dasharray="1 1"/><path d="M59.5 631.8L64 636.5L72.5 626" fill="none" stroke="#22e030" stroke-width="2.3"/><rect x="74" y="636.5" width="5" height="3" fill="#d0d0d0"/><rect x="84" y="636.5" width="5" height="3" fill="#d0d0d0"/><path d="M75 629V636.5H78.5M88 629V636.5H84.5" fill="none" stroke="#f58a1f" stroke-width="1.6"/><ellipse cx="81.5" cy="630.5" rx="5.2" ry="1.8" fill="none" stroke="#1ec0f0" stroke-width="1.3"/><ellipse cx="81.5" cy="633" rx="5.2" ry="1.8" fill="none" stroke="#1ec0f0" stroke-width="1.3"/><ellipse cx="81.5" cy="635" rx="5.2" ry="1.6" fill="none" stroke="#1ec0f0" stroke-width="1.2"/><rect x="80" y="623" width="3" height="4" fill="#bbb"/><path d="M49 651.5h9" stroke="#eee" stroke-dasharray="1 1"/><path d="M59.5 651.8L64 656.5L72.5 646" fill="none" stroke="#22e030" stroke-width="2.3"/><rect x="74" y="656.5" width="5" height="3" fill="#d0d0d0"/><rect x="84" y="656.5" width="5" height="3" fill="#d0d0d0"/><path d="M75 649V656.5H78.5M88 649V656.5H84.5" fill="none" stroke="#f58a1f" stroke-width="1.6"/><ellipse cx="81.5" cy="650.5" rx="5.2" ry="1.8" fill="none" stroke="#1ec0f0" stroke-width="1.3"/><ellipse cx="81.5" cy="653" rx="5.2" ry="1.8" fill="none" stroke="#1ec0f0" stroke-width="1.3"/><ellipse cx="81.5" cy="655" rx="5.2" ry="1.6" fill="none" stroke="#1ec0f0" stroke-width="1.2"/><rect x="80" y="643" width="3" height="4" fill="#bbb"/><path d="M49 671.5h9" stroke="#eee" stroke-dasharray="1 1"/><path d="M59.5 671.8L64 676.5L72.5 666" fill="none" stroke="#22e030" stroke-width="2.3"/><rect x="74" y="676.5" width="5" height="3" fill="#d0d0d0"/><rect x="84" y="676.5" width="5" height="3" fill="#d0d0d0"/><path d="M75 669V676.5H78.5M88 669V676.5H84.5" fill="none" stroke="#f58a1f" stroke-width="1.6"/><ellipse cx="81.5" cy="670.5" rx="5.2" ry="1.8" fill="none" stroke="#1ec0f0" stroke-width="1.3"/><ellipse cx="81.5" cy="673" rx="5.2" ry="1.8" fill="none" stroke="#1ec0f0" stroke-width="1.3"/><ellipse cx="81.5" cy="675" rx="5.2" ry="1.6" fill="none" stroke="#1ec0f0" stroke-width="1.2"/><rect x="80" y="663" width="3" height="4" fill="#bbb"/><path d="M30 691.5h9" stroke="#eee" stroke-dasharray="1 1"/><path d="M44 684L47 685L50 684V694.5Q50 698.5 47 698.5Q44 698.5 44 694.5Z" fill="#a9a9a9"/><path d="M44.5 688Q48 687 49.5 685M44.5 695Q49 693 49.5 689" stroke="#e8e8e8" stroke-width="1.1" fill="none"/><path d="M44.5 691l5-3" stroke="#777" stroke-width="0.9"/><path d="M30 711.5h9" stroke="#eee" stroke-dasharray="1 1"/><path d="M44 704L47 705L50 704V714.5Q50 718.5 47 718.5Q44 718.5 44 714.5Z" fill="#a9a9a9"/><path d="M44.5 708Q48 707 49.5 705M44.5 715Q49 713 49.5 709" stroke="#e8e8e8" stroke-width="1.1" fill="none"/><path d="M44.5 711l5-3" stroke="#777" stroke-width="0.9"/></svg>
<div class="tt" style="left:23px;top:1px">GENERIC_MACHINE</div>
<div class="tt" style="left:58px;top:21px">未用项</div>
<div class="tt" style="left:58px;top:41px">DJ1</div>
<div class="tt" style="left:93px;top:61px">SPOT_DRILLI</div>
<div class="tt" style="left:93px;top:81px">PLANAR_PRO</div>
<div class="tt" style="left:93px;top:101px">SPOT_DRILLI</div>
<div class="tt" style="left:93px;top:121px">PLANAR_PRO</div>
<div class="tt" style="left:93px;top:141px">PLANAR_PRO</div>
<div class="tt" style="left:58px;top:161px">Φ4.3</div>
<div class="tt" style="left:58px;top:181px">Φ5.1</div>
<div class="tt" style="left:58px;top:201px">Φ6.8</div>
<div class="tt" style="left:58px;top:221px">Φ8.5</div>
<div class="tt" style="left:58px;top:241px">Φ9</div>
<div class="tt" style="left:58px;top:261px">Φ11</div>
<div class="tt" style="left:58px;top:281px">Φ10.3</div>
<div class="tt" style="left:93px;top:301px">PECK_DRILLI</div>
<div class="tt" style="left:58px;top:321px">Φ13.5</div>
<div class="tt" style="left:58px;top:341px">D4</div>
<div class="tt" style="left:58px;top:361px">D6</div>
<div class="tt" style="left:58px;top:381px">D10</div>
<div class="tt" style="left:93px;top:401px">HOLE_MILLI</div>
<div class="tt" style="left:93px;top:421px">PLANAR_PRO</div>
<div class="tt" style="left:93px;top:441px">HOLE_MILLI</div>
<div class="tt" style="left:58px;top:461px">D12</div>
<div class="tt" style="left:58px;top:481px">D16</div>
<div class="tt" style="left:58px;top:501px">D30R0.8</div>
<div class="tt" style="left:93px;top:521px">HOLE_MILLI</div>
<div class="tt" style="left:93px;top:541px">HOLE_MILLI</div>
<div class="tt" style="left:93px;top:561px">HOLE_MILLI</div>
<div class="tt" style="left:58px;top:581px">D63</div>
<div class="tt" style="left:58px;top:601px">J10</div>
<div class="tt" style="left:93px;top:621px">HOLE_MILLI</div>
<div class="tt" style="left:93px;top:641px">HOLE_MILLI</div>
<div class="tt" style="left:93px;top:661px">HOLE_MILLI</div>
<div class="tt" style="left:58px;top:681px">Φ12</div>
<div class="tt" style="left:58px;top:701px">Φ14</div>
</div>
<div class="a" style="left:202px;top:288px;width:18px;height:715px;background:#eeeeee"></div>
<div class="a" style="left:210px;top:306px;width:2px;height:610px;background:#9a9a9a"></div>
<div class="a" style="left:38px;top:1003px;width:182px;height:17px;background:#eeeeee"></div>
<div class="a" style="left:56px;top:1011px;width:105px;height:2px;background:#9a9a9a"></div>

<!-- VIEWPORT -->
<div class="a" style="left:227px;top:199px;width:1141px;height:834px;background:#333"></div>
<div class="a" style="left:232px;top:199px;width:1px;height:834px;background:#262626"></div>
<div class="a" style="left:235px;top:224px;width:1133px;height:2px;background:#3196bf"></div>
<div class="a" style="left:235px;top:200px;width:18px;height:26px;background:#3a96bd"></div>
<svg class="a" style="left:235px;top:200px" width="18" height="26"><path d="M11 4H6.5V7.5H11V11H6.5V14.5H11" stroke="#fff" fill="none" stroke-width="1.1"/><path d="M13 22a5 5 0 0 1 5-6M13 19l0 3 3 0" stroke="#fff" fill="none" stroke-width="1.4"/></svg>
<div class="a" style="left:236px;top:226px;width:1132px;height:805px;background:linear-gradient(#b7b8ba 0px,#c3c4c6 160px,#d3d4d6 380px,#e0e1e3 560px,#e7e8ea 805px)"></div>
<svg class="a" style="left:0;top:0" width="1368" height="1033">
 <defs>
  <linearGradient id="wall" x1="0" x2="1"><stop offset="0" stop-color="#aec2b8"/><stop offset="0.5" stop-color="#a3b7ad"/><stop offset="1" stop-color="#7d9087"/></linearGradient>
  <linearGradient id="hl" x1="0" x2="1"><stop offset="0" stop-color="#b9ccc2"/><stop offset="1" stop-color="#7f9289"/></linearGradient>
 </defs>
 <!-- plate -->
 <path d="M875.5 436.5H1302.5V645.5H875.5L831.5 623.5V458.5Z" fill="#c6e0d4" stroke="#333" stroke-width="1"/>
 <path d="M875.5 645.5H1302.5V684.5H875.5Z" fill="#9db0a4" stroke="#333" stroke-width="1.2"/>
 <path d="M831.5 623.5L875.5 645.5V684.5L831.5 662.5Z" fill="#879a8f" stroke="#333" stroke-width="1"/>
 <g stroke="#333" stroke-width="0.9" fill="url(#hl)">
  <ellipse cx="911.5" cy="449.5" rx="11.5" ry="5.8"/><ellipse cx="1012" cy="449.5" rx="11.5" ry="5.8"/><ellipse cx="1112.5" cy="449.5" rx="11.5" ry="5.8"/><ellipse cx="1213.5" cy="449.5" rx="11.5" ry="5.8"/>
  <ellipse cx="961.5" cy="449.5" rx="6" ry="3"/><ellipse cx="1162.5" cy="449.5" rx="6" ry="3"/>
  <ellipse cx="911.5" cy="631.5" rx="11.5" ry="5.8"/><ellipse cx="1012" cy="631.5" rx="11.5" ry="5.8"/><ellipse cx="1112.5" cy="631.5" rx="11.5" ry="5.8"/><ellipse cx="1213.5" cy="631.5" rx="11.5" ry="5.8"/>
  <ellipse cx="961.5" cy="631.5" rx="6" ry="3"/><ellipse cx="1162.5" cy="631.5" rx="6" ry="3"/>
  <ellipse cx="1281" cy="458" rx="11.5" ry="5.8"/><ellipse cx="1281" cy="513" rx="11.5" ry="5.8"/><ellipse cx="1281" cy="568" rx="11.5" ry="5.8"/><ellipse cx="1281" cy="623" rx="11.5" ry="5.8"/>
  <ellipse cx="1281" cy="485.5" rx="6" ry="3"/><ellipse cx="1281" cy="596" rx="6" ry="3"/>
  <ellipse cx="1040.7" cy="497.2" rx="5" ry="2.7"/><ellipse cx="1113.3" cy="497.2" rx="5" ry="2.7"/><ellipse cx="989.4" cy="522.8" rx="5" ry="2.7"/><ellipse cx="1164.8" cy="522.8" rx="5" ry="2.7"/>
  <ellipse cx="989.4" cy="558.6" rx="5" ry="2.7"/><ellipse cx="1164.8" cy="558.6" rx="5" ry="2.7"/><ellipse cx="1040.7" cy="583.8" rx="5" ry="2.7"/><ellipse cx="1113.3" cy="583.8" rx="5" ry="2.7"/>
 </g>
 <g stroke="#333" stroke-width="0.8">
  <path d="M911.5 443.7v11.6M1012 443.7v11.6M1112.5 443.7v11.6M1213.5 443.7v11.6M961.5 446.5v6M1162.5 446.5v6"/>
  <path d="M911.5 625.7v11.6M1012 625.7v11.6M1112.5 625.7v11.6M1213.5 625.7v11.6M961.5 628.5v6M1162.5 628.5v6"/>
  <path d="M1281 452.2v11.6M1281 507.2v11.6M1281 562.2v11.6M1281 617.2v11.6M1281 482.5v6M1281 593v6"/>
 </g>
 <g stroke="#333" stroke-width="0.8" fill="#c8d8cf">
  <ellipse cx="959.5" cy="671" rx="3.8" ry="4"/><ellipse cx="987.5" cy="671" rx="3.8" ry="4"/><ellipse cx="1015.5" cy="671" rx="3.8" ry="4"/>
  <ellipse cx="1171.8" cy="671" rx="3.8" ry="4"/><ellipse cx="1199.8" cy="671" rx="3.8" ry="4"/><ellipse cx="1227.9" cy="671" rx="3.8" ry="4"/>
  <ellipse cx="1066.4" cy="664.8" rx="2.5" ry="2.5"/><ellipse cx="1099.6" cy="664.8" rx="3.5" ry="4"/><ellipse cx="1131.7" cy="664.8" rx="2.5" ry="2.5"/>
  <path d="M959.5 667v8M987.5 667v8M1015.5 667v8M1171.8 667v8M1199.8 667v8M1227.9 667v8M1099.6 661v8" fill="none"/>
 </g>
 <!-- keyway -->
 <path d="M993 535.5H980a9 5.5 0 0 0 0 11H993z" fill="url(#hl)" stroke="#333" stroke-width="0.9"/><path d="M981 535.5v11" stroke="#333" stroke-width="0.8"/>
 <!-- big hole -->
 <ellipse cx="1077.7" cy="540.7" rx="85.1" ry="42.1" fill="url(#wall)" stroke="#333" stroke-width="1"/>
 <path d="M997.5 554A80.2 28.2 0 0 1 1158 554" fill="none" stroke="#333" stroke-width="0.9"/>
 <path d="M997.5 554L1000.5 558.5M1158 554L1154.5 558.5" stroke="#333" stroke-width="0.9"/>
 <ellipse cx="1077.4" cy="558.9" rx="77" ry="23.8" fill="#d4d4d8" stroke="#333" stroke-width="1"/>
 <path d="M1077.5 498.6V535" stroke="#333" stroke-width="0.9"/>
 <!-- MCS -->
 <path d="M1067 540.7V466" stroke="#0b2fbf" stroke-width="2.2"/><path d="M1067 450l-4 20h8z" fill="#0b2fbf"/>
 <path d="M1067 540.7H1152" stroke="#d92b2b" stroke-width="2.2"/><path d="M1171 541l-21-4v7.5z" fill="#e03030"/>
 <path d="M1067 493l-4 10h8z" fill="#2d8a3a"/>
 <text x="1070" y="450" font-family="Liberation Sans" font-size="12" fill="#2a52e8">ZM</text>
 <text x="1069" y="490" font-family="Liberation Sans" font-size="12" fill="#2f9a3f">YM</text>
 <text x="1156" y="536" font-family="Liberation Sans" font-size="12" fill="#e03a3a">XM</text>
 <!-- WCS right -->
 <path d="M1302.5 540.5H1330" stroke="#8a4a44" stroke-width="1.6"/><path d="M1312 539.5L1345 537.5L1360 540.5L1345 543.5L1312 541.8Z" fill="#e42a2a"/><path d="M1328 536.5L1337 540.5L1328 544.5Z" fill="#9a6a66"/>
 <path d="M1302.5 540.5V520" stroke="#7a5048" stroke-width="1.6"/>
 <path d="M1302.5 491.5L1300 513L1302.5 532L1305 513Z" fill="#0b2fd0"/>
 <path d="M1299.5 518.5L1302.5 511L1305.5 518.5Z" fill="#7a5048"/><ellipse cx="1302.5" cy="527.5" rx="2.6" ry="3" fill="#7a5048"/>
 <text x="1306" y="491" font-family="Liberation Sans" font-size="12.5" fill="#2a52ee">ZC</text>
 <text x="1307" y="499.5" font-family="Liberation Sans" font-size="10.5" fill="#8a5050">Z</text>
 <text x="1306" y="512" font-family="Liberation Sans" font-size="12.5" fill="#2f9a3f">YC</text>
 <text x="1305.5" y="516.5" font-family="Liberation Sans" font-size="10" fill="#8a5050">Y</text>
 <text x="1342.5" y="536" font-family="Liberation Sans" font-size="12.5" fill="#e03a3a">XC</text>
 <path d="M1341.5 527.5l8.5 8.5M1341.5 536l8.5-8.5" stroke="#a05a5a" stroke-width="0.8"/>
 <!-- small triad -->
 <rect x="321.5" y="894.5" width="42" height="57" fill="none" stroke="#bdbdbd" stroke-width="1"/><path d="M322 914.5h41" stroke="#bdbdbd"/>
 <path d="M342 904V874" stroke="#0b2fbf" stroke-width="4" stroke-linecap="round"/><path d="M342 860l-5 16h10z" fill="#0b2fbf"/>
 <path d="M363 923H398" stroke="#d92b2b" stroke-width="3.5"/><path d="M416 923l-20-5v10z" fill="#d92b2b"/>
 <text x="338" y="856" font-family="Liberation Sans" font-size="11" fill="#2a52e8">Z</text>
 <text x="420" y="928" font-family="Liberation Sans" font-size="11" fill="#e03a3a">X</text>
</svg>
<div class="a" style="left:787px;top:374px;font-size:15px;line-height:18px;color:#e8202a;letter-spacing:0px">双击此项为添加铣</div>
<div class="a" style="left:787px;top:398px;font-size:15px;line-height:18px;color:#e8202a;letter-spacing:0px">加工机床类型</div>
<div class="a" style="left:1155px;top:1012px;font-family:'Liberation Mono',monospace;font-size:13.4px;line-height:17px;color:#6e6e6e;white-space:nowrap">UG<span style="font-size:13px;letter-spacing:2.6px">爱好者论坛</span> WWW.UGSNX.COM</div>
<div class="a" style="left:0;top:1031px;width:1368px;height:2px;background:#222"></div>

<!-- DIALOG -->
<div class="a" style="left:253px;top:46px;width:328px;height:688px;background:#323232;border:1px solid #222"></div>
<div class="a" style="left:253px;top:46px;width:328px;height:24px;background:#3895bb"></div>
<svg class="a" style="left:253px;top:46px" width="328" height="24">
 <g transform="translate(14,12.5)"><circle r="4.5" fill="none" stroke="#fff" stroke-width="2.6"/><path d="M0-7v3M0 4v3M-7 0h3M4 0h3M-5-5l2 2M3 3l2 2M-5 5l2-2M3-3l2-2" stroke="#fff" stroke-width="2.4"/></g>
 <path d="M308 7l10 10M318 7l-10 10" stroke="#fff" stroke-width="2"/>
</svg>
<div class="a" style="left:282px;top:50px;font-size:14px;line-height:17px;color:#fff">库类选择</div>
<div class="a" style="left:537px;top:49px;font:bold 16px/18px 'Liberation Sans',sans-serif;color:#fff">?</div>
<!-- group 1 -->
<div class="a" style="left:259px;top:74px;width:316px;height:538px;background:#444"></div>
<svg class="a" style="left:264px;top:83px" width="14" height="10"><path d="M1 1h10l-5 6z" fill="#3a9ec6"/></svg>
<div class="a" style="left:283px;top:79px;font-size:14px;line-height:17px;color:#3a9ec6">要搜索的类</div>
<div class="a" style="left:268px;top:104px;width:298px;height:500px;background:#2f2f2f;border:1px solid #1c1c1c"></div>
<div class="a" style="left:269px;top:105px;width:296px;height:498px;overflow:hidden"><svg class="a" style="left:0;top:0" width="296" height="498"><rect x="0" y="0" width="296" height="20" fill="#303030"/><rect x="0" y="20" width="296" height="20" fill="#353535"/><rect x="0" y="20" width="296" height="1" fill="#282828"/><rect x="0" y="40" width="296" height="20" fill="#303030"/><rect x="0" y="40" width="296" height="1" fill="#282828"/><rect x="0" y="60" width="296" height="20" fill="#353535"/><rect x="0" y="60" width="296" height="1" fill="#282828"/><rect x="0" y="80" width="296" height="20" fill="#303030"/><rect x="0" y="80" width="296" height="1" fill="#282828"/><rect x="0" y="100" width="296" height="20" fill="#353535"/><rect x="0" y="100" width="296" height="1" fill="#282828"/><rect x="0" y="120" width="296" height="20" fill="#303030"/><rect x="0" y="120" width="296" height="1" fill="#282828"/><rect x="0" y="140" width="296" height="20" fill="#353535"/><rect x="0" y="140" width="296" height="1" fill="#282828"/><rect x="0" y="160" width="296" height="20" fill="#303030"/><rect x="0" y="160" width="296" height="1" fill="#282828"/><rect x="0" y="180" width="296" height="20" fill="#353535"/><rect x="0" y="180" width="296" height="1" fill="#282828"/><rect x="0" y="200" width="296" height="20" fill="#303030"/><rect x="0" y="200" width="296" height="1" fill="#282828"/><rect x="0" y="220" width="296" height="20" fill="#353535"/><rect x="0" y="220" width="296" height="1" fill="#282828"/><rect x="0" y="240" width="296" height="20" fill="#303030"/><rect x="0" y="240" width="296" height="1" fill="#282828"/><rect x="0" y="260" width="296" height="20" fill="#353535"/><rect x="0" y="260" width="296" height="1" fill="#282828"/><rect x="0" y="280" width="296" height="20" fill="#303030"/><rect x="0" y="280" width="296" height="1" fill="#282828"/><rect x="0" y="300" width="296" height="20" fill="#353535"/><rect x="0" y="300" width="296" height="1" fill="#282828"/><rect x="0" y="320" width="296" height="20" fill="#303030"/><rect x="0" y="320" width="296" height="1" fill="#282828"/><rect x="0" y="340" width="296" height="20" fill="#353535"/><rect x="0" y="340" width="296" height="1" fill="#282828"/><rect x="0" y="360" width="296" height="20" fill="#303030"/><rect x="0" y="360" width="296" height="1" fill="#282828"/><rect x="0" y="380" width="296" height="20" fill="#353535"/><rect x="0" y="380" width="296" height="1" fill="#282828"/><rect x="0" y="400" width="296" height="20" fill="#303030"/><rect x="0" y="400" width="296" height="1" fill="#282828"/><rect x="0" y="420" width="296" height="20" fill="#353535"/><rect x="0" y="420" width="296" height="1" fill="#282828"/><rect x="0" y="440" width="296" height="20" fill="#303030"/><rect x="0" y="440" width="296" height="1" fill="#282828"/><rect x="0" y="460" width="296" height="20" fill="#353535"/><rect x="0" y="460" width="296" height="1" fill="#282828"/><rect x="0" y="480" width="296" height="18" fill="#303030"/><rect x="0" y="480" width="296" height="1" fill="#282828"/><rect x="0" y="0" width="295" height="20" fill="#01527a"/><path d="M10.5 31V151" stroke="#eee" stroke-dasharray="1 1"/><path d="M11 30.5h9" stroke="#eee" stroke-dasharray="1 1"/><path d="M11 50.5h9" stroke="#eee" stroke-dasharray="1 1"/><path d="M11 70.5h9" stroke="#eee" stroke-dasharray="1 1"/><path d="M11 90.5h9" stroke="#eee" stroke-dasharray="1 1"/><path d="M11 110.5h9" stroke="#eee" stroke-dasharray="1 1"/><path d="M11 130.5h9" stroke="#eee" stroke-dasharray="1 1"/><path d="M11 150.5h9" stroke="#eee" stroke-dasharray="1 1"/></svg><div class="dl" style="left:4px;top:1px">MACHINE</div><div class="dl" style="left:23px;top:21px">MILL</div><div class="dl" style="left:23px;top:41px">TURNMILL</div><div class="dl" style="left:23px;top:61px">LATHE</div><div class="dl" style="left:23px;top:81px">MILLTURN</div><div class="dl" style="left:23px;top:101px">WEDM</div><div class="dl" style="left:23px;top:121px">ROBOT</div><div class="dl" style="left:23px;top:141px">GENERIC</div></div>
<!-- group 2 -->
<div class="a" style="left:259px;top:616px;width:316px;height:70px;background:#444"></div>
<svg class="a" style="left:264px;top:626px" width="14" height="10"><path d="M1 1h10l-5 6z" fill="#3a9ec6"/></svg>
<div class="a" style="left:283px;top:620px;font-size:14px;line-height:17px;color:#3a9ec6">操作</div>
<div class="a" style="left:268px;top:653px;font-size:12px;line-height:16px;color:#fff">计算匹配数 (n)</div>
<div class="a" style="left:534px;top:646px;width:32px;height:32px;border:1px solid #cfcfcf;background:#3f3f3f"></div>
<div class="a" style="left:537px;top:649px;width:26px;height:26px;border:1px dotted #aaa"></div>
<svg class="a" style="left:534px;top:646px" width="32" height="32"><path d="M10 11a6 6 0 1 1 8 5.5q-2 1-2 3.5v2" fill="none" stroke="#f0a030" stroke-width="1.8"/><circle cx="16" cy="26" r="1.2" fill="#f0a030"/></svg>
<div class="a" style="left:393px;top:698px;width:54px;height:25px;background:#3ea6cc;font-size:12px;line-height:25px;text-align:center;color:#fff">确定</div>
<div class="a" style="left:452px;top:698px;width:54px;height:25px;border:1px solid #3ea6cc;font-size:12px;line-height:23px;text-align:center;color:#3ea6cc">返回</div>
<div class="a" style="left:511px;top:698px;width:54px;height:25px;border:1px solid #3ea6cc;font-size:12px;line-height:23px;text-align:center;color:#3ea6cc">取消</div>
<!-- annotation -->
<svg class="a" style="left:0;top:0" width="800" height="400">
 <path d="M355 133L366 136.5L366 140.5L356 145.5L351 144L360 139.5Z" fill="#0a0a0a"/>
 <g fill="none" stroke="#ee1c24" stroke-width="2.8" stroke-linecap="round" stroke-linejoin="round">
  <path d="M276 125.5C290 124.5 303 124.8 312 125.6C325 126.5 336 128.5 346 131C356 133 364 134.5 366.5 137.5C368 141 362 143 357 144.8C345 148.5 330 151.5 311 153C298 153 287 149 280 145.5C274 142.8 271.5 140 272 136C272.5 131 274 128 276 125.5"/>
  <path d="M368.4 145.4H394.5"/>
  <path d="M363.3 147.7Q366.8 150 366.8 153L367 186"/>
  <path d="M363.3 147.7C372 156 385 168 405 178.4C420 190 428 200 440 210C455 222 475 240 500 253C530 270 550 283 575 298C600 313 615 320 640 331C665 341 690 352 715 364L726 368.8L729 370.8L733 371.2L736 373L739 373.2L742 375.2L746 376.2L749 378.3L752 379.2L755.3 381.6"/>
 </g>
</svg>

</body></html>
